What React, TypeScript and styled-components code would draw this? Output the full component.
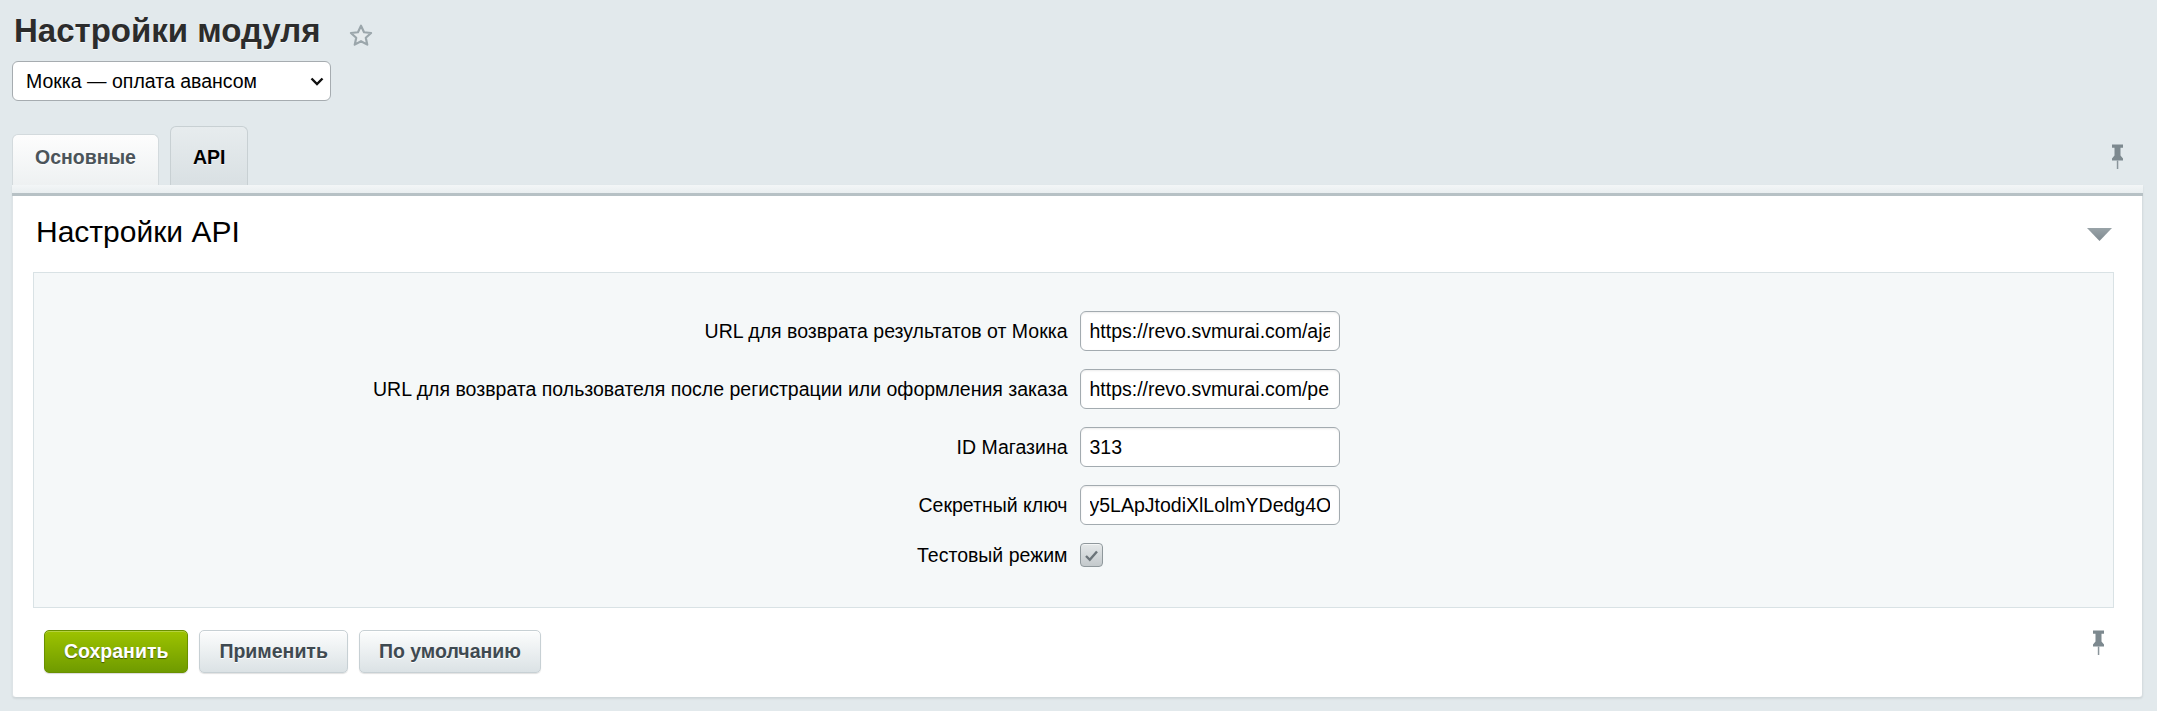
import * as React from 'react';
import styled, { createGlobalStyle } from 'styled-components';

const GlobalStyle = createGlobalStyle`
  html, body {
    margin: 0;
    padding: 0;
  }
  body {
    background: #e2e9ec;
    font-family: "Liberation Sans", Arial, sans-serif;
    color: #000;
  }
`;

const StyledPage = styled.div`
  padding: 0 14px 16px 12px;
`;

const StyledTitleRow = styled.div`
  display: flex;
  align-items: flex-start;
  padding: 11px 0 0 2px;
`;

const StyledTitle = styled.h1`
  margin: 0;
  font-size: 33px;
  line-height: 40px;
  font-weight: bold;
  color: #2c2c2c;
  text-shadow: 0 1px 0 rgba(255, 255, 255, 0.7);
`;

const StyledStar = styled.svg`
  width: 26px;
  height: 26px;
  margin: 12px 0 0 28px;
`;

const StyledSelectWrap = styled.div`
  position: relative;
  width: 319px;
  margin-top: 10px;
`;

const StyledSelect = styled.select`
  appearance: none;
  box-sizing: border-box;
  width: 100%;
  height: 40px;
  padding: 0 40px 0 13px;
  border: 1px solid #a6acb0;
  border-radius: 6px;
  background: #fff;
  font-family: "Liberation Sans", Arial, sans-serif;
  font-size: 19.5px;
  color: #000;
  outline: none;
`;

const StyledChevron = styled.svg`
  position: absolute;
  right: 7px;
  top: 16px;
  width: 14px;
  height: 9px;
  pointer-events: none;
`;

const StyledTabBar = styled.div`
  display: flex;
  align-items: flex-end;
  gap: 11px;
  margin-top: 25px;
`;

const StyledTab = styled.div<{ $active?: boolean }>`
  box-sizing: border-box;
  height: ${(p) => (p.$active ? 59 : 51)}px;
  padding: ${(p) => (p.$active ? 19 : 11)}px 22px 0 22px;
  border: 1px solid ${(p) => (p.$active ? '#c8d0d3' : '#d3dadd')};
  border-bottom: none;
  border-radius: 6px 6px 0 0;
  background: ${(p) =>
    p.$active
      ? 'linear-gradient(to bottom, #e7ecee, #d9e0e3)'
      : 'linear-gradient(to bottom, #fdfdfd, #eef1f2)'};
  font-size: 19.5px;
  line-height: 23px;
  font-weight: bold;
  color: ${(p) => (p.$active ? '#000' : '#4b545a')};
  text-shadow: 0 1px 0 rgba(255, 255, 255, 0.8);
`;

const StyledPin = styled.svg<{ $top?: number; $right?: number }>`
  width: 13px;
  height: 25px;
  margin-left: auto;
  align-self: flex-start;
  margin-top: ${(p) => p.$top ?? 0}px;
  margin-right: ${(p) => p.$right ?? 0}px;
  flex-shrink: 0;
`;

const StyledPanel = styled.div`
  background: #fff;
  border-right: 1px solid #d6dde0;
  border-left: 1px solid #dde3e6;
  border-bottom: 1px solid #cfd7da;
  border-radius: 0 0 4px 4px;
  box-shadow: 0 1px 2px rgba(0, 0, 0, 0.08);
`;

const StyledPanelTop = styled.div`
  height: 8px;
  background: linear-gradient(to bottom, #f3f6f7, #e9eef0);
  border-bottom: 3px solid #b7c1c5;
  margin: 0 -1px;
`;

const StyledPanelBody = styled.div`
  padding: 18px 28px 24px 20px;
`;

const StyledHeadingRow = styled.div`
  display: flex;
  align-items: center;
  justify-content: space-between;
  padding-left: 3px;
`;

const StyledHeading = styled.h2`
  margin: 0;
  font-size: 30px;
  line-height: 36px;
  font-weight: normal;
  color: #000;
`;

const StyledToggle = styled.svg`
  width: 25px;
  height: 13px;
  margin: 4px 2px 0 0;
`;

const StyledFormBox = styled.div`
  margin-top: 22px;
  padding: 38px 0 40px;
  background: #f5f8f9;
  border: 1px solid #d9e2e5;
  display: grid;
  grid-template-columns: 1fr 1fr;
  column-gap: 12px;
  row-gap: 18px;
  align-items: center;
`;

const StyledLabel = styled.label`
  text-align: right;
  font-size: 19.5px;
  line-height: 23px;
  color: #000;
  white-space: nowrap;
`;

const StyledInput = styled.input`
  box-sizing: border-box;
  width: 260px;
  height: 40px;
  padding: 0 9px;
  border: 1px solid #a3abb0;
  border-radius: 6px;
  background: #fff;
  box-shadow: inset 0 1px 2px rgba(0, 0, 0, 0.08);
  font-family: "Liberation Sans", Arial, sans-serif;
  font-size: 19.5px;
  color: #000;
  outline: none;
`;

const StyledCheck = styled.span`
  box-sizing: border-box;
  display: flex;
  align-items: center;
  justify-content: center;
  width: 23px;
  height: 24px;
  border: 1px solid #8f989c;
  border-radius: 4px;
  background: linear-gradient(to bottom, #e4e8e9, #c3c9cc);
  box-shadow: inset 0 1px 0 rgba(255, 255, 255, 0.6);
`;

const StyledButtonRow = styled.div`
  display: flex;
  align-items: center;
  gap: 11px;
  margin-top: 22px;
  padding-left: 11px;
`;

const StyledButton = styled.button<{ $primary?: boolean }>`
  box-sizing: border-box;
  height: 43px;
  padding: 0 19px;
  border-radius: 5px;
  border: 1px solid ${(p) => (p.$primary ? '#6a9100' : '#c7d0d4')};
  background: ${(p) =>
    p.$primary
      ? 'linear-gradient(to bottom, #9dc300, #6f9b00)'
      : 'linear-gradient(to bottom, #fcfdfd, #dbe2e5)'};
  box-shadow: ${(p) =>
    p.$primary
      ? 'inset 0 1px 0 rgba(255,255,255,0.25), 0 1px 1px rgba(0,0,0,0.15)'
      : 'inset 0 1px 0 #fff, 0 1px 1px rgba(0,0,0,0.12)'};
  font-family: "Liberation Sans", Arial, sans-serif;
  font-size: 19.5px;
  font-weight: bold;
  color: ${(p) => (p.$primary ? '#fff' : '#3f4a51')};
  text-shadow: ${(p) => (p.$primary ? '0 1px 1px rgba(0,0,0,0.45)' : '0 1px 0 #fff')};
  cursor: pointer;
`;

function PinIcon({ top, right }: { top?: number; right?: number }) {
  return (
    <StyledPin $top={top} $right={right} viewBox="0 0 13 25">
      <path d="M1 0.5h11v3.2H9.5v7.8l2.5 3V16.5H1v-2l2.5-3V3.7H1z" fill="#7d898f" />
      <rect x="5.8" y="16.5" width="1.5" height="8.5" fill="#8a959b" />
    </StyledPin>
  );
}

const fields = [
  { id: 'result-url', label: 'URL для возврата результатов от Мокка', value: 'https://revo.svmurai.com/ajax/mokka/result.php' },
  { id: 'return-url', label: 'URL для возврата пользователя после регистрации или оформления заказа', value: 'https://revo.svmurai.com/personal/order/' },
  { id: 'store-id', label: 'ID Магазина', value: '313' },
  { id: 'secret', label: 'Секретный ключ', value: 'y5LApJtodiXlLolmYDedg4OpQk' },
];

export default function App() {
  const [tab, setTab] = React.useState('api');

  return (
    <StyledPage>
      <GlobalStyle />
      <StyledTitleRow>
        <StyledTitle>Настройки модуля</StyledTitle>
        <StyledStar viewBox="0 0 24 24">
          <path
            d="M12 2.5l2.8 6 6.5.7-4.9 4.4 1.4 6.4L12 16.8 6.2 20l1.4-6.4-4.9-4.4 6.5-.7z"
            fill="#e6ebed"
            stroke="#9ba6ab"
            strokeWidth="2"
            strokeLinejoin="round"
          />
        </StyledStar>
      </StyledTitleRow>

      <StyledSelectWrap>
        <StyledSelect defaultValue="mokka">
          <option value="mokka">Мокка — оплата авансом</option>
        </StyledSelect>
        <StyledChevron viewBox="0 0 14 9">
          <path d="M1.5 1.5l5.5 5.5 5.5-5.5" fill="none" stroke="#111" strokeWidth="2.4" />
        </StyledChevron>
      </StyledSelectWrap>

      <StyledTabBar>
        <StyledTab $active={tab === 'main'} onClick={() => setTab('main')}>
          Основные
        </StyledTab>
        <StyledTab $active={tab === 'api'} onClick={() => setTab('api')}>
          API
        </StyledTab>
        <PinIcon top={18} right={19} />
      </StyledTabBar>

      <StyledPanel>
        <StyledPanelTop />
        <StyledPanelBody>
          <StyledHeadingRow>
            <StyledHeading>Настройки API</StyledHeading>
            <StyledToggle viewBox="0 0 25 13">
              <defs>
                <linearGradient id="tg" x1="0" y1="0" x2="0" y2="1">
                  <stop offset="0" stopColor="#99a3a8" />
                  <stop offset="1" stopColor="#7f8a90" />
                </linearGradient>
              </defs>
              <path d="M0 0h25L12.5 13z" fill="url(#tg)" />
            </StyledToggle>
          </StyledHeadingRow>

          <StyledFormBox>
            {fields.map((f) => (
              <React.Fragment key={f.id}>
                <StyledLabel htmlFor={f.id}>{f.label}</StyledLabel>
                <div>
                  <StyledInput id={f.id} type="text" defaultValue={f.value} />
                </div>
              </React.Fragment>
            ))}
            <StyledLabel>Тестовый режим</StyledLabel>
            <div>
              <StyledCheck>
                <svg width="15" height="13" viewBox="0 0 15 13">
                  <path d="M2 7l3.8 3.8L13 2.5" fill="none" stroke="#6b7479" strokeWidth="2.4" />
                </svg>
              </StyledCheck>
            </div>
          </StyledFormBox>

          <StyledButtonRow>
            <StyledButton $primary>Сохранить</StyledButton>
            <StyledButton>Применить</StyledButton>
            <StyledButton>По умолчанию</StyledButton>
            <PinIcon top={0} right={9} />
          </StyledButtonRow>
        </StyledPanelBody>
      </StyledPanel>
    </StyledPage>
  );
}
